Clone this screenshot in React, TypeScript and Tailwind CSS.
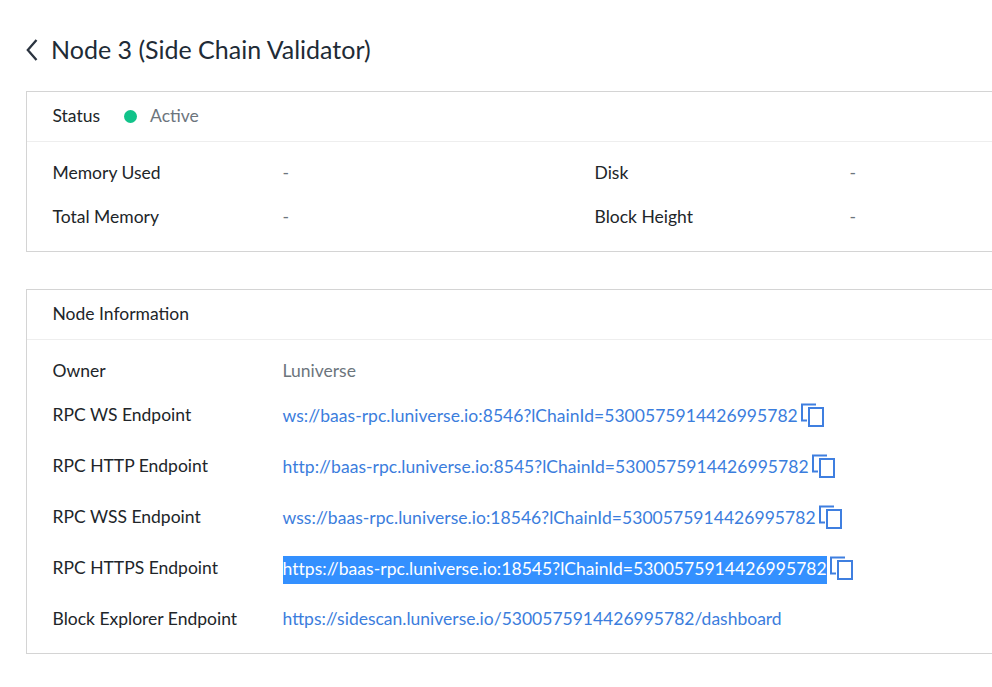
const CopyIcon = () => (
  <svg width="24" height="24" viewBox="0 0 24 24" fill="none" className="shrink-0 ml-[3px] -mt-[1px]">
    <path d="M15 1.5H1V17.5H6" stroke="#3f7fe0" strokeWidth="2" />
    <rect x="8" y="5" width="14" height="18" stroke="#3f7fe0" strokeWidth="2" />
  </svg>
);

const Link = ({ text, selected, plain }: { text: string; selected?: boolean; plain?: boolean }) => (
  <span
    className={
      selected
        ? "bg-[#3390ff] text-white h-[28px] mt-[2px] pb-[2px] flex items-center tracking-[0.045px]"
        : plain
          ? "text-[#3b7ddd]"
          : "text-[#3b7ddd] tracking-[0.04px]"
    }
  >
    {text}
  </span>
);

const Row = ({ label, h, children }: { label: string; h: string; children: React.ReactNode }) => (
  <div className={`flex items-center ${h}`}>
    <div className="w-[230px] shrink-0 text-[#212529] -mt-[2px]">{label}</div>
    <div className="flex items-center text-[#6c757d]">{children}</div>
  </div>
);

export default function App() {
  return (
    <div
      className="w-[992px] h-[687px] overflow-hidden bg-white pl-[26px] text-[17.5px] leading-[24px] text-[#212529]"
      style={{ fontFamily: "Lato, sans-serif" }}
    >
      <div className="flex items-center h-[91px] pt-[7px]">
        <svg width="12" height="22" viewBox="0 0 12 22" fill="none" className="shrink-0 mt-[2px]">
          <path d="M10.5 1L1.8 11L10.5 21" stroke="#2b3440" strokeWidth="2.3" />
        </svg>
        <h1 className="ml-[13px] text-[25px] leading-[32px] text-[#212b36]">Node 3 (Side Chain Validator)</h1>
      </div>

      <section className="w-[1000px] h-[161px] border border-[#d4d4d4]">
        <div className="h-[50px] border-b border-[#eeeeee] flex items-center pl-[25.5px] pb-[2px]">
          <span>Status</span>
          <span className="ml-[24px] mt-[2px] w-[13px] h-[13px] rounded-full bg-[#11c38a]" />
          <span className="ml-[13px] text-[#6c757d]">Active</span>
        </div>
        <div className="pl-[25.5px] pt-[9px] grid grid-cols-[230px_312px_255px_1fr]">
          <div className="h-[44px] flex items-center">Memory Used</div>
          <div className="h-[44px] flex items-center text-[#6c757d]">-</div>
          <div className="h-[44px] flex items-center">Disk</div>
          <div className="h-[44px] flex items-center text-[#6c757d]">-</div>
          <div className="h-[44px] flex items-center">Total Memory</div>
          <div className="h-[44px] flex items-center text-[#6c757d]">-</div>
          <div className="h-[44px] flex items-center">Block Height</div>
          <div className="h-[44px] flex items-center text-[#6c757d]">-</div>
        </div>
      </section>

      <section className="w-[1000px] h-[365px] mt-[37px] border border-[#d4d4d4]">
        <div className="h-[50px] border-b border-[#eeeeee] flex items-center pl-[25.5px] pb-[2px]">Node Information</div>
        <div className="pl-[25.5px] pt-[9px]">
          <Row label="Owner" h="h-[44px] [&>div:first-child]:mt-0">Luniverse</Row>
          <Row label="RPC WS Endpoint" h="h-[51px] -mt-[3px]">
            <Link text="ws://baas-rpc.luniverse.io:8546?lChainId=5300575914426995782" />
            <CopyIcon />
          </Row>
          <Row label="RPC HTTP Endpoint" h="h-[51px]">
            <Link text="http://baas-rpc.luniverse.io:8545?lChainId=5300575914426995782" />
            <CopyIcon />
          </Row>
          <Row label="RPC WSS Endpoint" h="h-[51px]">
            <Link text="wss://baas-rpc.luniverse.io:18546?lChainId=5300575914426995782" />
            <CopyIcon />
          </Row>
          <Row label="RPC HTTPS Endpoint" h="h-[51px]">
            <Link selected text="https://baas-rpc.luniverse.io:18545?lChainId=5300575914426995782" />
            <CopyIcon />
          </Row>
          <Row label="Block Explorer Endpoint" h="h-[51px] -mt-[1px] [&>div:first-child]:mt-0">
            <Link plain text="https://sidescan.luniverse.io/5300575914426995782/dashboard" />
          </Row>
        </div>
      </section>
    </div>
  );
}
